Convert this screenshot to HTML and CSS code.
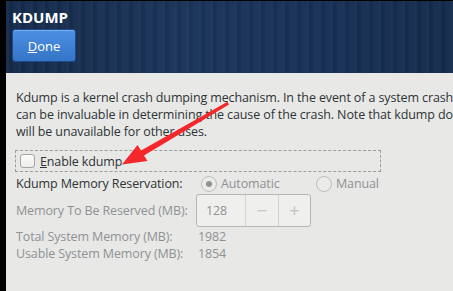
FILE: index.html
```html
<!DOCTYPE html>
<html lang="en">
<head>
  <meta charset="UTF-8" />
  <title>KDUMP</title>
  <link rel="stylesheet" href="styles.css">
</head>
<body>
  <div class="frame">
    <div class="edge"></div>
    <div class="main">
      <header class="topbar">
        <h1>KDUMP</h1>
        <button class="done"><u>D</u>one</button>
      </header>

      <section class="content">
        <p class="intro">
          Kdump is a kernel crash dumping mechanism. In the event of a system crash, kdump will capture information from your system<br>
          can be invaluable in determining the cause of the crash. Note that kdump does require reserving a portion of system memory<br>
          will be unavailable for other uses.
        </p>

        <label class="enable"><span class="check"></span><span><u>E</u>nable kdump</span></label>

        <div class="settings">
          <span class="key">Kdump Memory Reservation:</span>
          <div class="radios">
            <span class="radio-opt"><span class="radio on"></span>Automatic</span>
            <span class="radio-opt"><span class="radio"></span>Manual</span>
          </div>

          <span class="key muted">Memory To Be Reserved (MB):</span>
          <div class="spin">
            <span class="spin-entry">128</span>
            <span class="spin-btn">&minus;</span>
            <span class="spin-btn">+</span>
          </div>

          <span class="key muted">Total System Memory (MB):</span>
          <span class="val">1982</span>

          <span class="key muted">Usable System Memory (MB):</span>
          <span class="val">1854</span>
        </div>
      </section>
    </div>
  </div>

  <svg class="arrow" width="453" height="291" viewBox="0 0 453 291">
    <polygon points="229,104.5 144,155.5 147.5,161 122,164.5 137.5,145 141,150.5 227.5,101.8" fill="#f4272b"/>
  </svg>
</body>
</html>
```

FILE: styles.css
```css
:root {
  --text: #2e3436;
  --muted: #8f9293;
  --bg: #e8e8e7;
  --line: #b6b6b3;
}

* {
  margin: 0;
  padding: 0;
  box-sizing: border-box;
}

body {
  width: 453px;
  height: 291px;
  overflow: hidden;
  font-family: 'Open Sans', sans-serif;
  font-size: 12.5px;
  letter-spacing: -0.12px;
  color: var(--text);
  background: var(--bg);
}

.frame {
  display: flex;
  height: 100%;
}

.edge {
  width: 6px;
  flex: none;
  background: #000;
}

.main {
  flex: 1;
  min-width: 0;
  display: flex;
  flex-direction: column;
}

.topbar {
  height: 73px;
  border-top: 1px solid #000;
  padding: 7px 0 0 6px;
  background:
    repeating-linear-gradient(90deg, rgba(255,255,255,0.03) 0 3px, rgba(0,0,0,0.04) 3px 7px, rgba(255,255,255,0.02) 7px 12px),
    linear-gradient(90deg, #152a4a 0%, #1a3459 40%, #173056 70%, #142b4c 100%);
}

.topbar h1 {
  font-size: 15px;
  font-weight: bold;
  letter-spacing: 0;
  color: #fff;
  line-height: 18px;
}

.done {
  margin-top: 3px;
  width: 64px;
  height: 33px;
  border: 1px solid #1d4a88;
  border-radius: 3px;
  background: linear-gradient(#4d90e2, #3574c7);
  color: #fff;
  font-family: inherit;
  font-size: 13px;
  box-shadow: inset 0 1px rgba(255,255,255,0.25);
}

.content {
  flex: 1;
  padding: 16px 0 0 10px;
  overflow: hidden;
}

.intro {
  white-space: nowrap;
  line-height: 17px;
}

.enable {
  display: flex;
  align-items: center;
  gap: 5px;
  margin: 10px 0 0 -1px;
  width: 366px;
  height: 22px;
  padding-left: 4px;
  border: 1px dashed #9c9c9a;
}

.check {
  width: 15px;
  height: 14px;
  border: 1px solid #a5a5a2;
  border-radius: 3px;
  background: linear-gradient(#fbfbfb, #ededec);
}

.settings {
  display: grid;
  grid-template-columns: 180px auto;
  justify-content: start;
  justify-items: start;
  align-items: center;
  margin-top: 3px;
  line-height: 17px;
  white-space: nowrap;
}

.muted {
  color: var(--muted);
}

.radios {
  display: flex;
  padding-left: 5px;
  color: var(--muted);
}

.radio-opt {
  display: flex;
  align-items: center;
  gap: 4px;
  width: 115px;
}

.radio {
  width: 16px;
  height: 16px;
  border: 1px solid #bdbdba;
  border-radius: 50%;
  background: #ebebea;
  display: flex;
  align-items: center;
  justify-content: center;
}

.radio.on::after {
  content: "";
  width: 6px;
  height: 6px;
  border-radius: 50%;
  background: #8f9293;
}

.spin {
  display: flex;
  width: 115px;
  height: 33px;
  margin: 2px 0 1px;
  border: 1px solid var(--line);
  border-radius: 3px;
  background: #efefee;
  color: var(--muted);
}

.spin-entry {
  width: 49px;
  padding-left: 9px;
  display: flex;
  align-items: center;
}

.spin-btn {
  width: 33px;
  display: flex;
  align-items: center;
  justify-content: center;
  border-left: 1px solid #d3d3d1;
  color: #c4c4c2;
  font-size: 18px;
}

.val {
  padding-left: 2px;
  color: var(--muted);
}

.arrow {
  position: absolute;
  top: 0;
  left: 0;
  pointer-events: none;
}
```
